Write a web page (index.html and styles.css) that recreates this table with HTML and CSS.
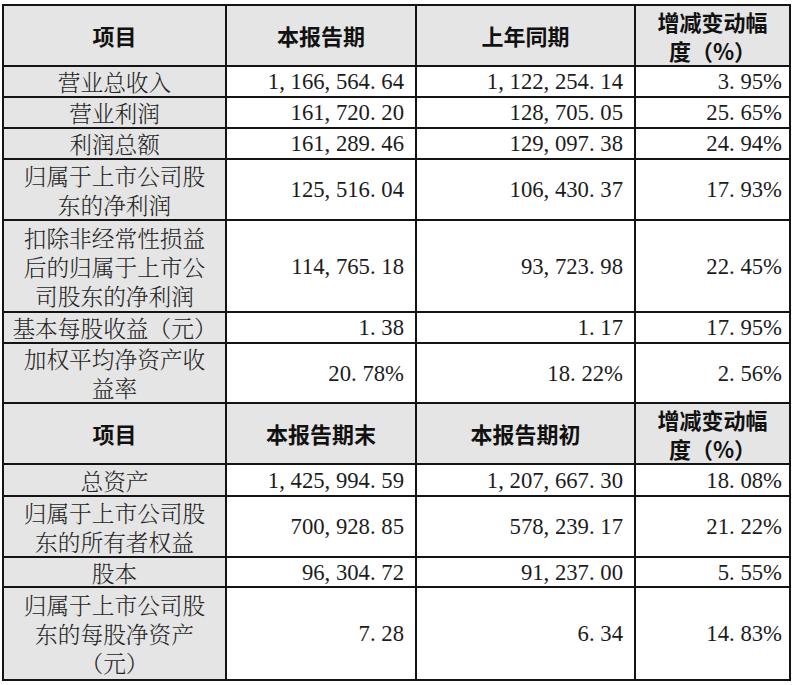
FILE: index.html
```html
<!DOCTYPE html>
<html lang="zh-CN">
<head>
<meta charset="utf-8">
<title>主要财务数据</title>
<link rel="stylesheet" href="styles.css">
</head>
<body>
<div class="sheet">
  <div class="cell head">项目</div>
  <div class="cell head">本报告期</div>
  <div class="cell head">上年同期</div>
  <div class="cell head">增减变动幅<br>度（%）</div>

  <div class="cell label">营业总收入</div>
  <div class="cell num">1<span class="p">,</span>166<span class="p">,</span>564<span class="p">.</span>64</div>
  <div class="cell num">1<span class="p">,</span>122<span class="p">,</span>254<span class="p">.</span>14</div>
  <div class="cell num last">3<span class="p">.</span>95%</div>

  <div class="cell label">营业利润</div>
  <div class="cell num">161<span class="p">,</span>720<span class="p">.</span>20</div>
  <div class="cell num">128<span class="p">,</span>705<span class="p">.</span>05</div>
  <div class="cell num last">25<span class="p">.</span>65%</div>

  <div class="cell label">利润总额</div>
  <div class="cell num">161<span class="p">,</span>289<span class="p">.</span>46</div>
  <div class="cell num">129<span class="p">,</span>097<span class="p">.</span>38</div>
  <div class="cell num last">24<span class="p">.</span>94%</div>

  <div class="cell label">归属于上市公司股<br>东的净利润</div>
  <div class="cell num">125<span class="p">,</span>516<span class="p">.</span>04</div>
  <div class="cell num">106<span class="p">,</span>430<span class="p">.</span>37</div>
  <div class="cell num last">17<span class="p">.</span>93%</div>

  <div class="cell label">扣除非经常性损益<br>后的归属于上市公<br>司股东的净利润</div>
  <div class="cell num">114<span class="p">,</span>765<span class="p">.</span>18</div>
  <div class="cell num">93<span class="p">,</span>723<span class="p">.</span>98</div>
  <div class="cell num last">22<span class="p">.</span>45%</div>

  <div class="cell label">基本每股收益（元）</div>
  <div class="cell num">1<span class="p">.</span>38</div>
  <div class="cell num">1<span class="p">.</span>17</div>
  <div class="cell num last">17<span class="p">.</span>95%</div>

  <div class="cell label">加权平均净资产收<br>益率</div>
  <div class="cell num">20<span class="p">.</span>78%</div>
  <div class="cell num">18<span class="p">.</span>22%</div>
  <div class="cell num last">2<span class="p">.</span>56%</div>

  <div class="cell head">项目</div>
  <div class="cell head">本报告期末</div>
  <div class="cell head">本报告期初</div>
  <div class="cell head">增减变动幅<br>度（%）</div>

  <div class="cell label">总资产</div>
  <div class="cell num">1<span class="p">,</span>425<span class="p">,</span>994<span class="p">.</span>59</div>
  <div class="cell num">1<span class="p">,</span>207<span class="p">,</span>667<span class="p">.</span>30</div>
  <div class="cell num last">18<span class="p">.</span>08%</div>

  <div class="cell label">归属于上市公司股<br>东的所有者权益</div>
  <div class="cell num">700<span class="p">,</span>928<span class="p">.</span>85</div>
  <div class="cell num">578<span class="p">,</span>239<span class="p">.</span>17</div>
  <div class="cell num last">21<span class="p">.</span>22%</div>

  <div class="cell label">股本</div>
  <div class="cell num">96<span class="p">,</span>304<span class="p">.</span>72</div>
  <div class="cell num">91<span class="p">,</span>237<span class="p">.</span>00</div>
  <div class="cell num last">5<span class="p">.</span>55%</div>

  <div class="cell label">归属于上市公司股<br>东的每股净资产<br>（元）</div>
  <div class="cell num">7<span class="p">.</span>28</div>
  <div class="cell num">6<span class="p">.</span>34</div>
  <div class="cell num last">14<span class="p">.</span>83%</div>
</div>
</body>
</html>
```

FILE: styles.css
```css
html, body {
  margin: 0;
  background: #ffffff;
}

body {
  padding: 4px 0 0 2px;
  color: #262626;
  font-family: "Noto Serif CJK SC", "Noto Sans CJK SC", sans-serif;
  font-size: 22.7px;
}

.sheet {
  display: grid;
  width: max-content;
  grid-template-columns: 221px 188px 217px 153px;
  grid-template-rows: 59px 29px 29px 29px 59px 90px 29px 58px 59px 30px 59px 28px 91px;
  gap: 2px;
  padding: 2px;
  background: #141414;
}

.cell {
  display: flex;
  align-items: center;
  background: #ffffff;
  line-height: 29px;
  white-space: nowrap;
}

.head {
  justify-content: center;
  text-align: center;
  background: #e5e5e5;
  font-family: "Noto Sans CJK SC", sans-serif;
  font-weight: 700;
  font-size: 22px;
  line-height: 29px;
  color: #111111;
}

.label {
  justify-content: center;
  text-align: center;
  background: #e5e5e5;
  font-weight: 300;
}

.num {
  justify-content: flex-end;
  padding-right: 11px;
  font-family: "Liberation Serif", "Noto Sans CJK SC", serif;
  font-size: 22.7px;
  color: #1c1c1c;
}

.num.last {
  padding-right: 7px;
}

.p {
  letter-spacing: 0.25em;
}
```
